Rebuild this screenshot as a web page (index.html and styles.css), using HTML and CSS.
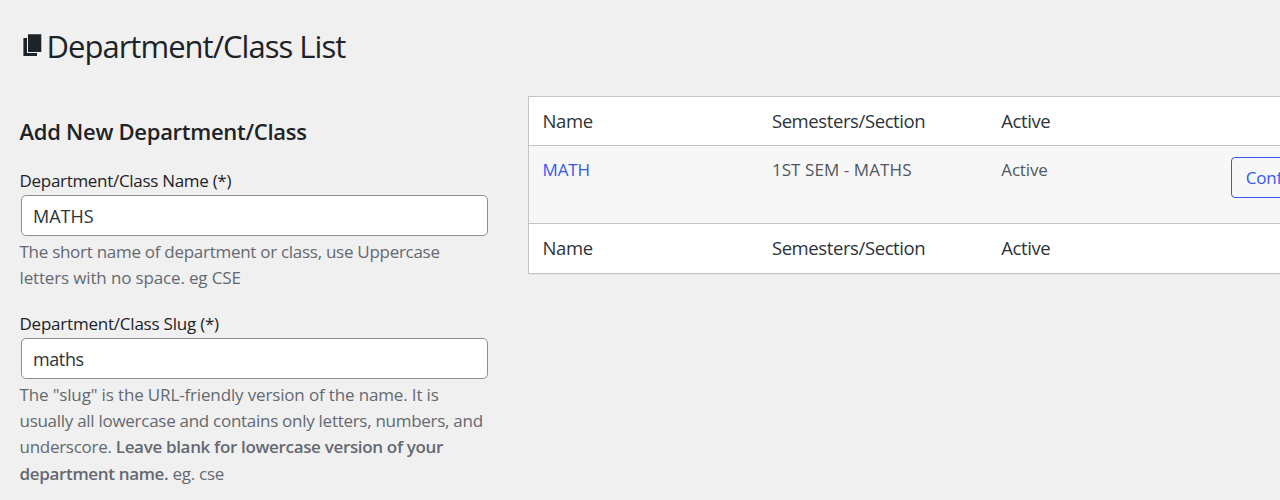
FILE: index.html
```html
<!DOCTYPE html>
<html lang="en">
<head>
<meta charset="utf-8">
<title>Department/Class List</title>
<link rel="stylesheet" href="styles.css">
</head>
<body>
<main class="wrap">
  <h1 class="page-title">
    <svg class="page-icon" viewBox="0 0 20 24" aria-hidden="true"><path d="M5 1.3h13.3V19H5zM.4 5H4v15h10v3H.4z"/></svg>
    <span>Department/Class List</span>
  </h1>
  <div class="columns">
    <form class="form">
      <h2 class="form-title">Add New Department/Class</h2>
      <div class="field">
        <label class="label" for="name">Department/Class Name (*)</label>
        <input class="input upper" id="name" type="text" value="MATHS">
        <p class="help">The short name of department or class, use Uppercase<br><span class="loose">letters with no space. eg CSE</span></p>
      </div>
      <div class="field">
        <label class="label slug-label" for="slug">Department/Class Slug (*)</label>
        <input class="input" id="slug" type="text" value="maths">
        <p class="help"><span class="loose">The "slug" is the URL-friendly version of the name. It is</span><br>usually all lowercase and contains only letters, numbers, and<br>underscore. <strong>Leave blank for lowercase version of your<br>department name.</strong> eg. cse</p>
      </div>
    </form>
    <div class="table">
      <div class="row head"><span>Name</span><span>Semesters/Section</span><span>Active</span><span></span></div>
      <div class="row item"><a class="link">MATH</a><span class="section">1ST SEM - MATHS</span><span>Active</span><span><button class="button" type="button">Configure</button></span></div>
      <div class="row foot"><span>Name</span><span>Semesters/Section</span><span>Active</span><span></span></div>
    </div>
  </div>
</main>
</body>
</html>
```
FILE: styles.css
```css
* { box-sizing: border-box; }
body {
  margin: 0;
  background: #f0f0f0;
  color: #1d2327;
  font-family: "Open Sans", "Noto Sans", sans-serif;
  font-size: 17px;
  white-space: nowrap;
}
.wrap { height: 500px; padding: 25px 0 0 19.5px; overflow: hidden; }
.page-title {
  display: flex;
  align-items: center;
  margin: 0;
  height: 42px;
  font-size: 31px;
  font-weight: 400;
  line-height: 42px;
  letter-spacing: -0.98px;
}
.page-icon { flex: none; width: 20px; height: 24px; margin: -2px 3.5px 0 3.5px; fill: #1d2327; }
.columns { display: flex; align-items: flex-start; margin-top: 29px; }
.form { flex: none; width: 508px; padding-top: 19px; }
.form-title {
  margin: 0 0 21px;
  font-size: 22px;
  font-weight: 600;
  line-height: 32px;
  letter-spacing: -0.28px;
}
.field { height: 143px; }
.label { display: block; height: 27px; line-height: 26px; letter-spacing: -0.3px; }
.slug-label { letter-spacing: -0.22px; }
.input {
  display: block;
  width: 467px;
  height: 41px;
  margin: 0 0 0 1.5px;
  padding: 1px 11px 0;
  border: 1px solid #8c8f94;
  border-radius: 5px;
  background: #fff;
  color: #2c3338;
  font: inherit;
  font-size: 18px;
  letter-spacing: -0.4px;
}
.upper { letter-spacing: 0; }
.help { margin: 3px 0 0; color: #646970; line-height: 26.2px; letter-spacing: -0.28px; }
.help strong { font-weight: 600; letter-spacing: -0.33px; }
.loose { letter-spacing: -0.15px; }
.table {
  flex: none;
  width: 960px;
  border: 1px solid #c3c4c7;
  background: #fff;
  box-shadow: 0 1px 1px rgba(0, 0, 0, 0.04);
}
.row { display: grid; grid-template-columns: repeat(3, 229.4px) 1fr; padding-left: 14px; line-height: 26px; }
.head, .foot { padding-top: 11px; color: #2c3338; font-size: 18.5px; letter-spacing: -0.4px; }
.head { height: 48px; }
.foot { height: 49px; }
.item {
  height: 79px;
  padding-top: 11px;
  border: solid #c3c4c7;
  border-width: 1px 0;
  background: #f7f7f7;
  color: #50575e;
  letter-spacing: -0.15px;
}
.section { letter-spacing: 0.08px; }
.link { color: #3858e9; }
.button {
  height: 41px;
  padding: 1px 14px 0;
  border: 1px solid #3858e9;
  border-radius: 4px;
  background: #f7f7f7;
  color: #3858e9;
  font: inherit;
  letter-spacing: inherit;
}
```
